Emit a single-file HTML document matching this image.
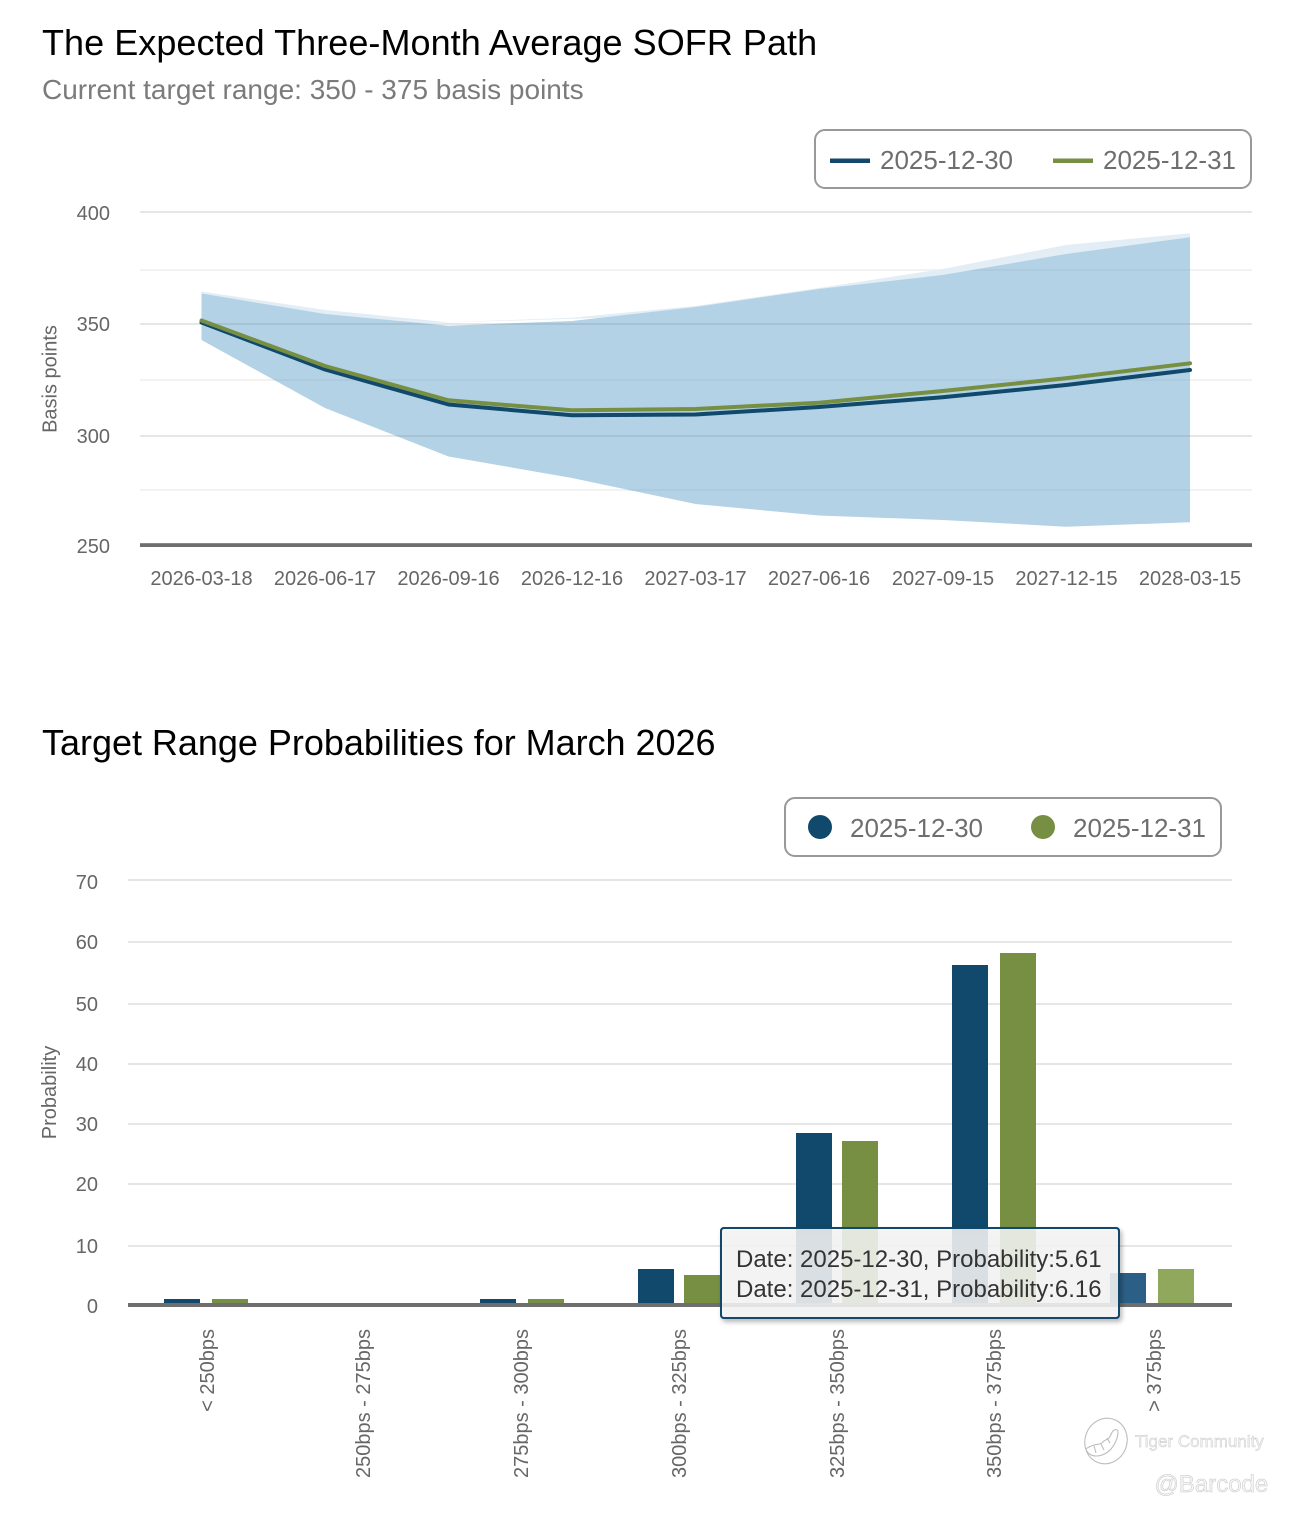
<!DOCTYPE html>
<html lang="en">
<head>
<meta charset="utf-8">
<title>SOFR Path</title>
<style>
html,body{margin:0;padding:0;background:#fff;}
svg{display:block;}
text{font-family:"Liberation Sans",Arial,sans-serif;}
.t{font-size:36px;fill:#000;}
.s{font-size:28px;fill:#7b7b7b;}
.l{font-size:26px;fill:#6e6e6e;}
.a{font-size:20px;fill:#666;}
.e{text-anchor:end;}
.m{text-anchor:middle;}
.tt{font-size:24px;fill:#333;}
.w1{font-size:17px;fill:#f2f2f2;stroke:#c4c4c4;stroke-width:.4px;}
.w2{font-size:24px;fill:#f6f6f6;stroke:#c4c4c4;stroke-width:.5px;}
</style>
</head>
<body>
<svg width="1291" height="1513" viewBox="0 0 1291 1513" xmlns="http://www.w3.org/2000/svg">
<defs>
<filter id="sh" x="-5%" y="-10%" width="110%" height="125%"><feDropShadow dx="2" dy="3" stdDeviation="2.5" flood-color="#000" flood-opacity=".3"/></filter>
<clipPath id="ac"><polygon points="201.5,293.5 325,314 448.5,325.7 572,321 695.5,307 819,289 942.5,275 1066,254 1190,237.3 1190,522.3 1066,526.7 942.5,520 819,515.5 695.5,504 572,478 448.5,456.5 325,408 201.5,340"/></clipPath>
</defs>
<rect width="1291" height="1513" fill="#fff"/>

<text x="42" y="55" class="t" style="letter-spacing:.05px">The Expected Three-Month Average SOFR Path</text>
<text x="42" y="99" class="s">Current target range: 350 - 375 basis points</text>

<rect x="815" y="130" width="436" height="58" rx="10" fill="#fff" stroke="#999" stroke-width="2"/>
<rect x="830" y="158.5" width="40" height="4.5" fill="#10496b"/>
<text x="880" y="169" class="l">2025-12-30</text>
<rect x="1053" y="158.5" width="40" height="4.5" fill="#768f42"/>
<text x="1103" y="169" class="l">2025-12-31</text>

<g stroke-width="2">
<line x1="140" x2="1252" y1="212" y2="212" stroke="#e6e6e6"/>
<line x1="140" x2="1252" y1="270" y2="270" stroke="#f2f2f2"/>
<line x1="140" x2="1252" y1="324" y2="324" stroke="#e6e6e6"/>
<line x1="140" x2="1252" y1="380" y2="380" stroke="#f2f2f2"/>
<line x1="140" x2="1252" y1="436" y2="436" stroke="#e6e6e6"/>
<line x1="140" x2="1252" y1="490" y2="490" stroke="#f2f2f2"/>
</g>

<polygon fill="#e2edf5" points="201.5,291.5 325,310 448.5,322.3 572,317.7 695.5,306 819,288 942.5,269 1066,245 1190,233.3 1190,300 201.5,330"/>
<polygon fill="#b3d2e6" points="201.5,293.5 325,314 448.5,325.7 572,321 695.5,307 819,289 942.5,275 1066,254 1190,237.3 1190,522.3 1066,526.7 942.5,520 819,515.5 695.5,504 572,478 448.5,456.5 325,408 201.5,340"/>
<g clip-path="url(#ac)" stroke-width="2">
<line x1="140" x2="1252" y1="270" y2="270" stroke="#000" stroke-opacity=".03"/>
<line x1="140" x2="1252" y1="324" y2="324" stroke="#000" stroke-opacity=".07"/>
<line x1="140" x2="1252" y1="380" y2="380" stroke="#000" stroke-opacity=".03"/>
<line x1="140" x2="1252" y1="436" y2="436" stroke="#000" stroke-opacity=".07"/>
<line x1="140" x2="1252" y1="490" y2="490" stroke="#000" stroke-opacity=".03"/>
</g>

<polyline fill="none" stroke="#10496b" stroke-width="4" stroke-linecap="round" stroke-linejoin="round" points="201.5,322.5 325,369.5 448.5,404.5 572,415.3 695.5,414.5 819,407 942.5,397.3 1066,385 1190,370"/>
<polyline fill="none" stroke="#768f42" stroke-width="4" stroke-linecap="round" stroke-linejoin="round" points="201.5,320.5 325,366 448.5,400.3 572,410.3 695.5,409 819,402.7 942.5,391 1066,378.3 1190,363.3"/>

<rect x="140" y="543.2" width="1112" height="3.8" fill="#6e6e6e"/>

<text x="110" y="220" class="a e">400</text>
<text x="110" y="331" class="a e">350</text>
<text x="110" y="443" class="a e">300</text>
<text x="110" y="553" class="a e">250</text>
<text transform="translate(56.5,379) rotate(-90)" class="a m">Basis points</text>

<text x="201.5" y="585" class="a m">2026-03-18</text>
<text x="325" y="585" class="a m">2026-06-17</text>
<text x="448.5" y="585" class="a m">2026-09-16</text>
<text x="572" y="585" class="a m">2026-12-16</text>
<text x="695.5" y="585" class="a m">2027-03-17</text>
<text x="819" y="585" class="a m">2027-06-16</text>
<text x="943" y="585" class="a m">2027-09-15</text>
<text x="1066.5" y="585" class="a m">2027-12-15</text>
<text x="1190" y="585" class="a m">2028-03-15</text>

<text x="42" y="755" class="t" style="letter-spacing:-.02px">Target Range Probabilities for March 2026</text>

<rect x="785" y="798" width="436" height="58" rx="10" fill="#fff" stroke="#999" stroke-width="2"/>
<circle cx="820" cy="827" r="12" fill="#10496b"/>
<text x="850" y="837" class="l">2025-12-30</text>
<circle cx="1043" cy="827" r="12" fill="#768f42"/>
<text x="1073" y="837" class="l">2025-12-31</text>

<g stroke="#e6e6e6" stroke-width="2">
<line x1="128" x2="1232" y1="880" y2="880"/>
<line x1="128" x2="1232" y1="942" y2="942"/>
<line x1="128" x2="1232" y1="1004" y2="1004"/>
<line x1="128" x2="1232" y1="1064" y2="1064"/>
<line x1="128" x2="1232" y1="1124" y2="1124"/>
<line x1="128" x2="1232" y1="1184" y2="1184"/>
<line x1="128" x2="1232" y1="1246" y2="1246"/>
</g>

<g fill="#10496b">
<rect x="164" y="1299" width="36" height="5"/>
<rect x="480" y="1299" width="36" height="5"/>
<rect x="638" y="1269" width="36" height="35"/>
<rect x="796" y="1133" width="36" height="171"/>
<rect x="952" y="965" width="36" height="339"/>
</g>
<rect x="1110" y="1273" width="36" height="31" fill="#2b5f85"/>
<g fill="#768f42">
<rect x="212" y="1299" width="36" height="5"/>
<rect x="528" y="1299" width="36" height="5"/>
<rect x="684" y="1275" width="36" height="29"/>
<rect x="842" y="1141" width="36" height="163"/>
<rect x="1000" y="953" width="36" height="351"/>
</g>
<rect x="1158" y="1269" width="36" height="35" fill="#90a85c"/>
<rect x="128" y="1303" width="1104" height="4" fill="#6e6e6e"/>

<text x="98" y="889" class="a e">70</text>
<text x="98" y="949" class="a e">60</text>
<text x="98" y="1011" class="a e">50</text>
<text x="98" y="1071" class="a e">40</text>
<text x="98" y="1131" class="a e">30</text>
<text x="98" y="1191" class="a e">20</text>
<text x="98" y="1253" class="a e">10</text>
<text x="98" y="1313" class="a e">0</text>
<text transform="translate(56,1092.5) rotate(-90)" class="a m">Probability</text>

<text transform="translate(214,1329) rotate(-90)" class="a e">&lt; 250bps</text>
<text transform="translate(370,1329) rotate(-90)" class="a e">250bps - 275bps</text>
<text transform="translate(528,1329) rotate(-90)" class="a e">275bps - 300bps</text>
<text transform="translate(686,1329) rotate(-90)" class="a e">300bps - 325bps</text>
<text transform="translate(844,1329) rotate(-90)" class="a e">325bps - 350bps</text>
<text transform="translate(1001,1329) rotate(-90)" class="a e">350bps - 375bps</text>
<text transform="translate(1161,1329) rotate(-90)" class="a e">&gt; 375bps</text>

<rect x="721" y="1228" width="398" height="90" rx="3" fill="#f7f7f7" fill-opacity=".85" stroke="#12496b" stroke-width="2" filter="url(#sh)"/>
<rect x="721" y="1228" width="398" height="90" rx="3" fill="none" stroke="#12496b" stroke-width="2"/>
<text x="736" y="1267" class="tt">Date: 2025-12-30, Probability:5.61</text>
<text x="736" y="1297" class="tt">Date: 2025-12-31, Probability:6.16</text>

<g fill="none" stroke="#bdbdbd" stroke-width="1.1">
<ellipse cx="1106" cy="1441" rx="21" ry="23" transform="rotate(20 1106 1441)"/>
<path d="M1086 1449c1 4 5 7 10 7 8 0 15-5 19-13 2-4 3-8 3-11 0-3-3-3-5-1-2 2-2 5-4 7-2 2-5 2-6 4-3 3-6 2-9 3-3 1-6 2-8 4z"/>
<path d="M1094 1446l2 7M1101 1444l3 6M1107 1438l3 5"/>
</g>
<text x="1135" y="1447" class="w1">Tiger Community</text>
<text x="1154.5" y="1492" class="w2">@Barcode</text>
</svg>
</body>
</html>
